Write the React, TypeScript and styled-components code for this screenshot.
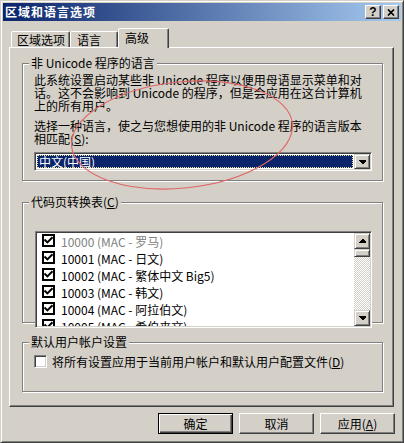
import React from "react";
import styled, { createGlobalStyle } from "styled-components";

const FACE = "#d4d0c8";
const SHADOW = "#808080";
const DARK = "#404040";
const NAVY = "#0a246a";
const FONT = `"Noto Sans CJK SC", "Noto Sans", sans-serif`;

const Global = createGlobalStyle`
  html, body { margin: 0; padding: 0; background: ${FACE}; }
  body { font-family: ${FONT}; font-size: 12px; color: #000; }
  #root { width: 404px; height: 443px; }
`;

const Window = styled.div`
  position: relative;
  width: 404px;
  height: 443px;
  box-sizing: border-box;
  background: ${FACE};
  border: 1px solid;
  border-color: ${FACE} ${DARK} ${DARK} ${FACE};
  box-shadow: inset 1px 1px 0 #fff, inset -1px -1px 0 ${SHADOW};
  padding: 2px;
  display: flex;
  flex-direction: column;
  overflow: hidden;
`;

const TitleBar = styled.div`
  height: 18px;
  display: flex;
  align-items: center;
  padding: 0 2px 0 2px;
  background: linear-gradient(to right, ${NAVY}, #a6caf0);
`;

const Title = styled.div`
  flex: 1;
  color: #fff;
  font-weight: bold;
  font-size: 12px;
  letter-spacing: 1px;
  line-height: 18px;
  white-space: nowrap;
`;

const CaptionButton = styled.div<{ $gap?: boolean }>`
  width: 16px;
  height: 14px;
  box-sizing: border-box;
  background: ${FACE};
  border: 1px solid;
  border-color: #fff ${DARK} ${DARK} #fff;
  box-shadow: inset -1px -1px 0 ${SHADOW};
  display: flex;
  align-items: center;
  justify-content: center;
  margin-left: ${(p) => (p.$gap ? "2px" : "0")};
  font-family: "Liberation Sans", sans-serif;
  font-weight: bold;
  font-size: 12px;
  line-height: 12px;
`;

const Body = styled.div`
  padding: 7px 0 0 6px;
  display: flex;
  flex-direction: column;
`;

const TabStrip = styled.div`
  display: flex;
  align-items: flex-end;
  height: 19px;
  padding-left: 2px;
  position: relative;
  z-index: 1;
`;

const Tab = styled.div<{ $w: number; $active?: boolean; $pl: number }>`
  width: ${(p) => p.$w}px;
  height: ${(p) => (p.$active ? 20 : 16)}px;
  margin-bottom: ${(p) => (p.$active ? -1 : 0)}px;
  box-sizing: border-box;
  background: ${FACE};
  border: 1px solid;
  border-bottom: none;
  border-color: #fff ${DARK} transparent #fff;
  border-radius: 2px 2px 0 0;
  box-shadow: inset -1px 0 0 ${SHADOW};
  padding-left: ${(p) => p.$pl}px;
  padding-top: ${(p) => (p.$active ? 1 : 0)}px;
  line-height: 15px;
  white-space: nowrap;
`;

const Panel = styled.div`
  width: 385px;
  height: 360px;
  box-sizing: border-box;
  border: 1px solid;
  border-color: #fff ${DARK} ${DARK} #fff;
  box-shadow: inset -1px -1px 0 ${SHADOW};
  padding: 15px 0 0 12px;
  display: flex;
  flex-direction: column;
`;

const Group = styled.div<{ $h: number; $mt?: number; $pt: number }>`
  position: relative;
  width: 361px;
  height: ${(p) => p.$h}px;
  margin-top: ${(p) => p.$mt ?? 0}px;
  box-sizing: border-box;
  border: 1px solid ${SHADOW};
  box-shadow: inset 1px 1px 0 #fff, 1px 1px 0 #fff;
  padding: ${(p) => p.$pt}px 0 0 11px;
  display: flex;
  flex-direction: column;
`;

const Legend = styled.span`
  position: absolute;
  top: -8px;
  left: 6px;
  padding: 0 2px;
  background: ${FACE};
  line-height: 14px;
  white-space: nowrap;
`;

const Para = styled.div<{ $mt?: number }>`
  line-height: 13px;
  white-space: nowrap;
  margin-top: ${(p) => p.$mt ?? 0}px;
`;

const Combo = styled.div`
  margin-top: 7px;
  width: 338px;
  height: 19px;
  box-sizing: border-box;
  border: 1px solid;
  border-color: ${SHADOW} #fff #fff ${SHADOW};
  box-shadow: inset 1px 1px 0 ${DARK}, inset -1px -1px 0 ${FACE};
  padding: 1px;
  background: #fff;
  display: flex;
`;

const ComboValue = styled.div`
  flex: 1;
  margin: 1px;
  background: ${NAVY};
  color: #fff;
  outline: 1px dotted #e8e4a0;
  outline-offset: -1px;
  padding-left: 2px;
  line-height: 13px;
  white-space: nowrap;
`;

const RaisedButton = styled.div<{ $w: number; $h: number }>`
  width: ${(p) => p.$w}px;
  height: ${(p) => p.$h}px;
  box-sizing: border-box;
  background: ${FACE};
  border: 1px solid;
  border-color: ${FACE} ${DARK} ${DARK} ${FACE};
  box-shadow: inset 1px 1px 0 #fff, inset -1px -1px 0 ${SHADOW};
  display: flex;
  align-items: center;
  justify-content: center;
  flex: none;
`;

const ListBox = styled.div`
  margin: 14px 0 0 1px;
  width: 337px;
  height: 97px;
  box-sizing: border-box;
  border: 1px solid;
  border-color: ${SHADOW} #fff #fff ${SHADOW};
  box-shadow: inset 1px 1px 0 ${DARK}, inset -1px -1px 0 ${FACE};
  padding: 1px;
  background: #fff;
  display: flex;
`;

const Items = styled.div`
  flex: 1;
  overflow: hidden;
  background: #fff;
`;

const Row = styled.div<{ $disabled?: boolean }>`
  height: 17px;
  display: flex;
  align-items: flex-start;
  padding: 1px 0 0 5px;
  box-sizing: border-box;
  color: ${(p) => (p.$disabled ? SHADOW : "#000")};
  line-height: 15px;
  white-space: nowrap;
`;

const FlatCheck = styled.div`
  width: 13px;
  height: 13px;
  box-sizing: border-box;
  border: 1px solid #000;
  box-shadow: inset 0 0 0 1px #000;
  background: #fff;
  display: flex;
  align-items: center;
  justify-content: center;
  margin-right: 6px;
  flex: none;
`;

const ScrollBar = styled.div`
  width: 16px;
  display: flex;
  flex-direction: column;
  background: repeating-conic-gradient(#fff 0 25%, ${FACE} 0 50%) 0 0 / 2px 2px;
`;

const Track = styled.div`
  flex: 1;
`;

const CheckRow = styled.div`
  display: flex;
  align-items: center;
  white-space: nowrap;
  line-height: 13px;
`;

const Check3D = styled.div`
  width: 13px;
  height: 13px;
  box-sizing: border-box;
  border: 1px solid;
  border-color: ${SHADOW} #fff #fff ${SHADOW};
  box-shadow: inset 1px 1px 0 ${DARK}, inset -1px -1px 0 ${FACE};
  background: #fff;
  margin-right: 5px;
  flex: none;
`;

const ButtonRow = styled.div`
  display: flex;
  justify-content: flex-end;
  gap: 6px;
  margin-top: 6px;
  padding-right: 6px;
`;

const PushButton = styled.div<{ $default?: boolean }>`
  width: 75px;
  height: 21px;
  box-sizing: border-box;
  background: ${FACE};
  border: 1px solid;
  border-color: ${(p) => (p.$default ? "#000" : `#fff ${DARK} ${DARK} #fff`)};
  box-shadow: ${(p) =>
    p.$default
      ? `inset 1px 1px 0 #fff, inset -1px -1px 0 ${DARK}, inset -2px -2px 0 ${SHADOW}`
      : `inset -1px -1px 0 ${SHADOW}`};
  display: flex;
  align-items: center;
  justify-content: center;
  line-height: 13px;
  white-space: nowrap;
`;

const Overlay = styled.svg`
  position: absolute;
  left: 0;
  top: 0;
  pointer-events: none;
`;

const Arrow = ({ down }: { down?: boolean }) => (
  <svg width="7" height="4" viewBox="0 0 7 4" shapeRendering="crispEdges">
    {down ? (
      <polygon points="0,0 7,0 7,1 4,4 3,4 0,1" fill="#000" />
    ) : (
      <polygon points="3,0 4,0 7,3 7,4 0,4 0,3" fill="#000" />
    )}
  </svg>
);

const CheckMark = () => (
  <svg width="9" height="9" viewBox="0 0 9 9">
    <path d="M1.2 4.2 L3.4 6.4 L7.8 2" stroke="#000" strokeWidth="2" fill="none" strokeLinecap="square" />
  </svg>
);

const rows = [
  { t: "10000 (MAC - 罗马)", d: true },
  { t: "10001 (MAC - 日文)" },
  { t: "10002 (MAC - 繁体中文 Big5)" },
  { t: "10003 (MAC - 韩文)" },
  { t: "10004 (MAC - 阿拉伯文)" },
  { t: "10005 (MAC - 希伯来文)" },
];

export default function App() {
  return (
    <Window>
      <Global />
      <TitleBar>
        <Title>区域和语言选项</Title>
        <CaptionButton>?</CaptionButton>
        <CaptionButton $gap>
          <svg width="8" height="7" viewBox="0 0 8 7">
            <path d="M1 0.5 L7 6.5 M7 0.5 L1 6.5" stroke="#000" strokeWidth="1.7" />
          </svg>
        </CaptionButton>
      </TitleBar>
      <Body>
        <TabStrip>
          <Tab $w={59} $pl={5}>区域选项</Tab>
          <Tab $w={48} $pl={6}>语言</Tab>
          <Tab $w={51} $pl={6} $active>高级</Tab>
        </TabStrip>
        <Panel>
          <Group $h={118} $pt={9}>
            <Legend>非 Unicode 程序的语言</Legend>
            <Para>
              此系统设置启动某些非 Unicode 程序以便用母语显示菜单和对
              <br />
              话。这不会影响到 Unicode 的程序，但是会应用在这台计算机
              <br />
              上的所有用户。
            </Para>
            <Para $mt={7}>
              选择一种语言，使之与您想使用的非 Unicode 程序的语言版本
              <br />
              相匹配(<u>S</u>):
            </Para>
            <Combo>
              <ComboValue>中文(中国)</ComboValue>
              <RaisedButton $w={16} $h={15}>
                <Arrow down />
              </RaisedButton>
            </Combo>
          </Group>
          <Group $h={121} $mt={21} $pt={14}>
            <Legend>
              代码页转换表(<u>C</u>)
            </Legend>
            <ListBox>
              <Items>
                {rows.map((r) => (
                  <Row key={r.t} $disabled={r.d}>
                    <FlatCheck>
                      <CheckMark />
                    </FlatCheck>
                    {r.t}
                  </Row>
                ))}
              </Items>
              <ScrollBar>
                <RaisedButton $w={16} $h={16}>
                  <Arrow />
                </RaisedButton>
                <RaisedButton $w={16} $h={8} />
                <Track />
                <RaisedButton $w={16} $h={16}>
                  <Arrow down />
                </RaisedButton>
              </ScrollBar>
            </ListBox>
          </Group>
          <Group $h={50} $mt={19} $pt={12}>
            <Legend>默认用户帐户设置</Legend>
            <CheckRow>
              <Check3D />
              将所有设置应用于当前用户帐户和默认用户配置文件(<u>D</u>)
            </CheckRow>
          </Group>
        </Panel>
        <ButtonRow>
          <PushButton $default>确定</PushButton>
          <PushButton>取消</PushButton>
          <PushButton>
            应用(<u>A</u>)
          </PushButton>
        </ButtonRow>
      </Body>
      <Overlay width="404" height="443" viewBox="0 0 404 443">
        <ellipse
          cx="181"
          cy="134"
          rx="111"
          ry="53"
          transform="rotate(-6 181 134)"
          fill="none"
          stroke="#e06666"
          strokeWidth="1.1"
        />
      </Overlay>
    </Window>
  );
}
